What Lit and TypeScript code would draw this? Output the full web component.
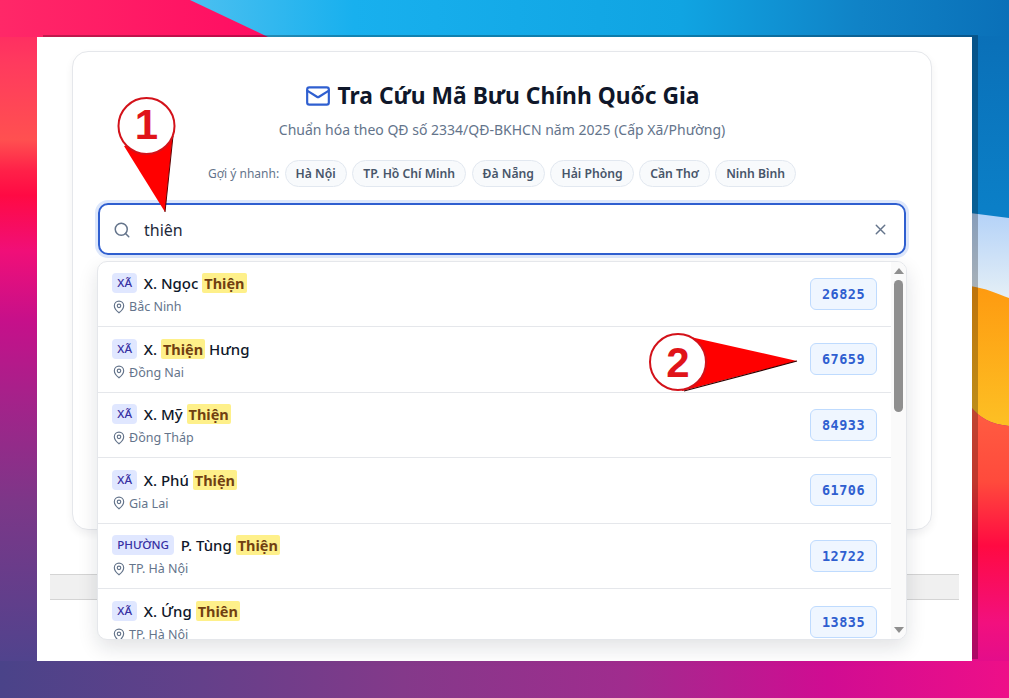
import { LitElement, html, css, svg } from "lit";
import { customElement } from "lit/decorators.js";

type Row = { kind: string; pre: string; hit: string; post: string; place: string; code: string };
const ROWS: Row[] = [
  { kind: "XÃ", pre: "X. Ngọc ", hit: "Thiện", post: "", place: "Bắc Ninh", code: "26825" },
  { kind: "XÃ", pre: "X. ", hit: "Thiện", post: " Hưng", place: "Đồng Nai", code: "67659" },
  { kind: "XÃ", pre: "X. Mỹ ", hit: "Thiện", post: "", place: "Đồng Tháp", code: "84933" },
  { kind: "XÃ", pre: "X. Phú ", hit: "Thiện", post: "", place: "Gia Lai", code: "61706" },
  { kind: "PHƯỜNG", pre: "P. Tùng ", hit: "Thiện", post: "", place: "TP. Hà Nội", code: "12722" },
  { kind: "XÃ", pre: "X. Ứng ", hit: "Thiên", post: "", place: "TP. Hà Nội", code: "13835" },
];
const CHIPS = ["Hà Nội", "TP. Hồ Chí Minh", "Đà Nẵng", "Hải Phòng", "Cần Thơ", "Ninh Bình"];

const wallpaper = svg`<svg class="wall" viewBox="0 0 1009 698" width="1009" height="698" preserveAspectRatio="none">
  <defs>
    <linearGradient id="left" gradientUnits="userSpaceOnUse" x1="0" y1="0" x2="0" y2="698">
      <stop offset="0" stop-color="#ff1f66"/><stop offset="0.09" stop-color="#ff3a5e"/>
      <stop offset="0.2" stop-color="#ff5050"/><stop offset="0.245" stop-color="#ff2048"/>
      <stop offset="0.28" stop-color="#ff0a44"/><stop offset="0.36" stop-color="#f00f78"/>
      <stop offset="0.46" stop-color="#c6108a"/><stop offset="0.56" stop-color="#a8208a"/>
      <stop offset="0.72" stop-color="#7c3788"/><stop offset="1" stop-color="#46468e"/>
    </linearGradient>
    <linearGradient id="top" gradientUnits="userSpaceOnUse" x1="0" y1="0" x2="270" y2="0">
      <stop offset="0" stop-color="#ff2868"/><stop offset="1" stop-color="#ff0c62"/>
    </linearGradient>
    <linearGradient id="bot" gradientUnits="userSpaceOnUse" x1="0" y1="0" x2="1009" y2="0">
      <stop offset="0" stop-color="#4a4389"/><stop offset="0.2" stop-color="#64408a"/>
      <stop offset="0.4" stop-color="#84398a"/><stop offset="0.62" stop-color="#a02c8e"/>
      <stop offset="0.82" stop-color="#d00c92"/><stop offset="1" stop-color="#ee0f88"/>
    </linearGradient>
    <linearGradient id="blue" gradientUnits="userSpaceOnUse" x1="190" y1="0" x2="1009" y2="0">
      <stop offset="0" stop-color="#4cc0f0"/><stop offset="0.2" stop-color="#18b0ee"/>
      <stop offset="0.6" stop-color="#10a4e2"/><stop offset="0.82" stop-color="#1082c6"/><stop offset="1" stop-color="#0a70b8"/>
    </linearGradient>
    <linearGradient id="deep" x1="0" y1="0" x2="0" y2="1">
      <stop offset="0" stop-color="#0a70b8"/><stop offset="1" stop-color="#0b80c8"/>
    </linearGradient>
    <linearGradient id="sky" x1="0" y1="0" x2="0" y2="1">
      <stop offset="0" stop-color="#b4d2f8"/><stop offset="1" stop-color="#e6f0f6"/>
    </linearGradient>
    <linearGradient id="org" x1="0" y1="0" x2="0" y2="1">
      <stop offset="0" stop-color="#fe9a10"/><stop offset="1" stop-color="#fdc024"/>
    </linearGradient>
    <linearGradient id="right" gradientUnits="userSpaceOnUse" x1="0" y1="405" x2="0" y2="661">
      <stop offset="0" stop-color="#ff5e42"/><stop offset="0.3" stop-color="#ff4a3c"/>
      <stop offset="0.55" stop-color="#ff0a42"/><stop offset="0.85" stop-color="#f2107e"/><stop offset="1" stop-color="#e40d8a"/>
    </linearGradient>
  </defs>
  <rect width="1009" height="698" fill="url(#left)"/>
  <rect width="270" height="37" fill="url(#top)"/>
  <rect y="661" width="1009" height="37" fill="url(#bot)"/>
  <polygon points="190,0 1009,0 1009,37 268,37" fill="url(#blue)"/>
  <rect x="970" y="36" width="39" height="182" fill="url(#deep)"/>
  <polygon points="970,213 1009,218 1009,300 970,287" fill="url(#sky)"/>
  <path d="M970,286 C985,288 998,294 1009,298 L1009,426 C990,424 980,418 970,406 Z" fill="url(#org)"/>
  <path d="M970,406 C980,418 990,424 1009,426 L1009,661 L970,661 Z" fill="url(#right)"/>
</svg>`;

const pin = html`<svg class="pin" viewBox="0 0 24 24" fill="none" stroke="currentColor" stroke-width="2" stroke-linecap="round" stroke-linejoin="round"><path d="M20 10c0 6-8 12-8 12s-8-6-8-12a8 8 0 0 1 16 0Z"/><circle cx="12" cy="10" r="3"/></svg>`;

@customElement("app-root")
export class AppRoot extends LitElement {
  static styles = css`
    :host { display: block; position: relative; width: 1009px; height: 698px; overflow: hidden; font-family: "Noto Sans", sans-serif; color: #0f172a; }
    .wall { position: absolute; inset: 0; display: block; }
    .frame { position: absolute; left: 37px; top: 37px; width: 935px; height: 624px; box-sizing: border-box; background: #fff; box-shadow: 6px -2px 0 rgba(0,0,0,.25); padding: 14px 13px 0 13px; }
    .card { box-sizing: border-box; margin: 0 27px 0 22px; height: 479px; border: 1px solid #e5e7eb; border-radius: 16px; box-shadow: 0 4px 8px rgba(15,23,42,.06); background: #fff; padding: 28px 25px 0; display: flex; flex-direction: column; align-items: center; position: relative; }
    .title { margin: 0; display: flex; align-items: center; gap: 7px; font-size: 22.8px; font-weight: 700; line-height: 32px; }
    .title svg { width: 26px; height: 26px; color: #2f5fd0; }
    .sub { margin: 8px 0 0; font-size: 14px; line-height: 20px; color: #64748b; }
    .chips { display: flex; align-items: center; gap: 5.5px; margin-top: 20px; height: 27px; font-size: 12px; color: #64748b; }
    .chip { box-sizing: border-box; height: 27px; display: flex; align-items: center; padding: 0 10px; border: 1px solid #e2e8f0; border-radius: 14px; background: #f8fafc; color: #475569; font-weight: 600; font-size: 12.2px; }
    .search { box-sizing: border-box; align-self: stretch; margin-top: 16px; height: 52px; border: 2px solid #2f5fd0; border-radius: 10px; box-shadow: 0 0 0 3px #dde7fb; display: flex; align-items: center; padding: 1px 15px 0 13px; gap: 13px; font-size: 16px; color: #1e293b; }
    .search .q { flex: 1; }
    .search svg { width: 18px; height: 18px; color: #64748b; }
    .search .x { width: 17px; height: 17px; }
    .foot { box-sizing: border-box; height: 26px; margin-top: 44px; background: #f0f0f0; border-top: 1px solid #d4d4d4; border-bottom: 1px solid #d4d4d4; }
    .drop { position: absolute; left: 97px; top: 261px; width: 810px; height: 379px; box-sizing: border-box; background: #fff; border: 1px solid #e5e7eb; border-radius: 10px; box-shadow: 0 8px 20px rgba(15,23,42,.12); overflow: hidden; display: flex; }
    .list { width: 793px; flex: none; margin-top: -0.5px; }
    .row { box-sizing: border-box; height: 65.5px; padding: 0 14px; display: flex; align-items: center; justify-content: space-between; border-bottom: 1px solid #e5e7eb; }
    .row:last-child { border-bottom: 0; }
    .left { display: flex; flex-direction: column; gap: 5px; padding-top: 1px; }
    .name { display: flex; align-items: center; gap: 6.5px; font-size: 15px; font-weight: 500; line-height: 20px; white-space: pre; }
    .kind { font-size: 11.6px; font-weight: 500; color: #3730a3; background: #e0e7ff; border-radius: 4px; padding: 0 5.3px; line-height: 20px; }
    mark { display: inline-block; font-size: 14.5px; background: #fef08a; color: #713f12; font-weight: 700; border-radius: 2px; padding: 0 2px; line-height: 20px; }
    .place { display: flex; align-items: center; gap: 3px; font-size: 12.5px; color: #64748b; line-height: 17px; }
    .pin { width: 14px; height: 14px; color: #64748b; }
    .code { box-sizing: border-box; width: 67px; height: 32px; display: flex; align-items: center; justify-content: center; font-family: "DejaVu Sans Mono", monospace; font-weight: 700; font-size: 13.5px; letter-spacing: .5px; color: #2f5fd0; background: #eff6ff; border: 1px solid #bfdbfe; border-radius: 6px; }
    .bar { flex: 1; position: relative; background: #fafafa; }
    .thumb { position: absolute; left: 3px; top: 18px; width: 9px; height: 132px; border-radius: 5px; background: #8f8f8f; }
    .ar { position: absolute; left: 3px; width: 0; height: 0; border-left: 5px solid transparent; border-right: 5px solid transparent; }
    .up { top: 6px; border-bottom: 6px solid #8f8f8f; }
    .down { bottom: 6px; border-top: 6px solid #8f8f8f; }
    .callout { position: absolute; left: 0; top: 0; pointer-events: none; }
    .num { font-family: "Liberation Sans", Arial, sans-serif; font-weight: 700; font-size: 42px; fill: #e0141a; }
  `;

  render() {
    return html`
      ${wallpaper}
      <div class="frame">
        <div class="card">
          <h1 class="title"><svg viewBox="0 0 24 24" fill="none" stroke="currentColor" stroke-width="2" stroke-linecap="round" stroke-linejoin="round"><rect x="2" y="4" width="20" height="16" rx="2"/><path d="m22 7-8.97 5.7a1.94 1.94 0 0 1-2.06 0L2 7"/></svg>Tra Cứu Mã Bưu Chính Quốc Gia</h1>
          <p class="sub">Chuẩn hóa theo QĐ số 2334/QĐ-BKHCN năm 2025 (Cấp Xã/Phường)</p>
          <div class="chips"><span>Gợi ý nhanh:</span>${CHIPS.map((c) => html`<span class="chip">${c}</span>`)}</div>
          <div class="search">
            <svg viewBox="0 0 24 24" fill="none" stroke="currentColor" stroke-width="2" stroke-linecap="round"><circle cx="11" cy="11" r="8"/><path d="m21 21-4.3-4.3"/></svg>
            <span class="q">thiên</span>
            <svg class="x" viewBox="0 0 24 24" fill="none" stroke="currentColor" stroke-width="2" stroke-linecap="round"><path d="M18 6 6 18M6 6l12 12"/></svg>
          </div>
        </div>
        <div class="foot"></div>
      </div>
      <div class="drop">
        <div class="list">
          ${ROWS.map((r) => html`<div class="row">
            <div class="left">
              <div class="name"><span class="kind">${r.kind}</span><span>${r.pre}<mark>${r.hit}</mark>${r.post}</span></div>
              <div class="place">${pin}${r.place}</div>
            </div>
            <div class="code">${r.code}</div>
          </div>`)}
        </div>
        <div class="bar"><div class="ar up"></div><div class="thumb"></div><div class="ar down"></div></div>
      </div>
      <svg class="callout" width="1009" height="698" viewBox="0 0 1009 698">
        <polygon points="124,146 173,134 165,212" fill="#ff0000"/>
        <path d="M173,136 L165,212" stroke="#5a0000" stroke-width="1" fill="none"/>
        <circle cx="146.5" cy="126" r="28" fill="#fff" stroke="#d3121a" stroke-width="2"/>
        <text class="num" x="146.5" y="139" text-anchor="middle">1</text>
        <polygon points="686,336 682,391 797,361" fill="#ff0000"/>
        <path d="M684,391 L797,361" stroke="#300000" stroke-width="1.2" fill="none"/>
        <circle cx="678" cy="362" r="28" fill="#fff" stroke="#d3121a" stroke-width="2"/>
        <text class="num" x="678" y="377" text-anchor="middle">2</text>
      </svg>
    `;
  }
}
